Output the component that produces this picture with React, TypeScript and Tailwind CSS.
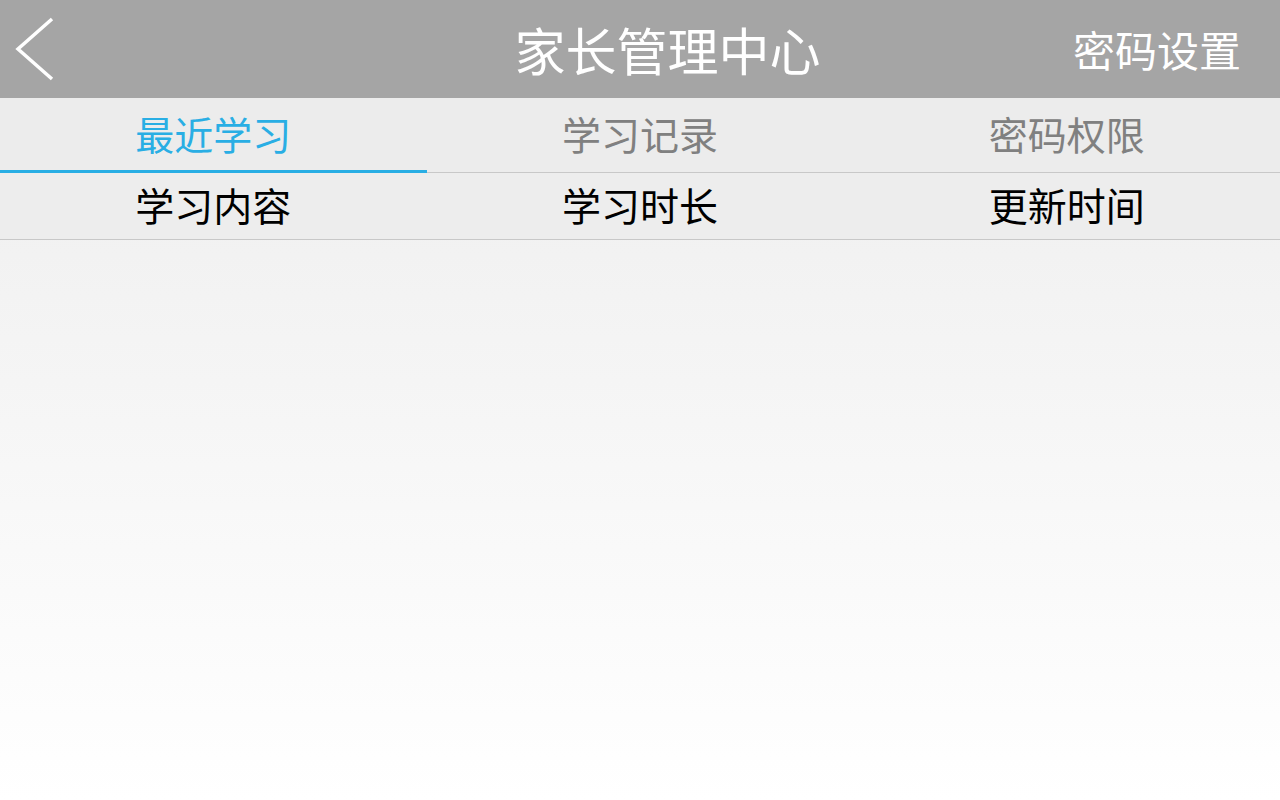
export default function App() {
  const tabs = [
    { label: "最近学习", active: true },
    { label: "学习记录", active: false },
    { label: "密码权限", active: false },
  ];
  const columns = ["学习内容", "学习时长", "更新时间"];

  return (
    <div
      className="w-[1280px] h-[800px] flex flex-col bg-gradient-to-b from-[#ececec] to-white"
      style={{ fontFamily: '"Noto Sans CJK SC", "Noto Sans", sans-serif' }}
    >
      {/* top bar */}
      <div className="h-[98px] shrink-0 bg-[#a5a5a5] flex items-center relative">
        <button className="w-[70px] h-full flex items-center pl-[14px]">
          <svg width="42" height="66" viewBox="0 0 42 66" fill="none">
            <path d="M38 3 L4 33 L38 63" stroke="white" strokeWidth="3.5" />
          </svg>
        </button>
        <h1 className="flex-1 text-center text-white text-[51px] leading-none pl-[192px]">
          家长管理中心
        </h1>
        <span className="text-white text-[42px] leading-none pr-[39px]">密码设置</span>
      </div>

      {/* tabs */}
      <div className="h-[75px] shrink-0 grid grid-cols-3 bg-[#ececec] border-b border-[#c8c8c8]">
        {tabs.map((t) => (
          <div
            key={t.label}
            className={
              t.active
                ? "flex items-center justify-center text-[39px] text-[#29aee4] border-b-[3px] border-[#29aee4] -mb-px pb-[2px]"
                : "flex items-center justify-center text-[39px] text-[#808080] pb-[4px]"
            }
          >
            {t.label}
          </div>
        ))}
      </div>

      {/* column header */}
      <div className="h-[67px] shrink-0 grid grid-cols-3 bg-[#ededed] border-b border-[#c8c8c8]">
        {columns.map((c) => (
          <div key={c} className="flex items-center justify-center text-[39px] text-black pb-[3px]">
            {c}
          </div>
        ))}
      </div>

      <div className="flex-1" />
    </div>
  );
}
